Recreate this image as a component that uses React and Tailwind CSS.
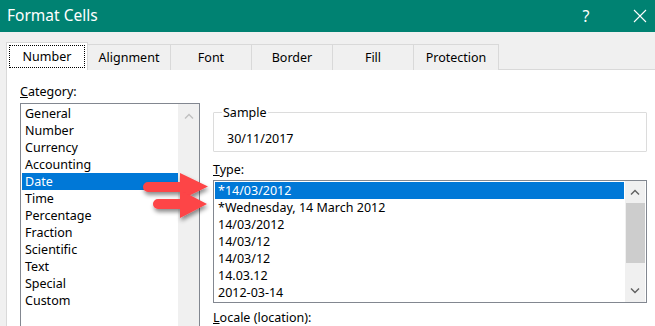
import React from "react";

const categories = ["General","Number","Currency","Accounting","Date","Time","Percentage","Fraction","Scientific","Text","Special","Custom"];
const types = ["*14/03/2012","*Wednesday, 14 March 2012","14/03/2012","14/03/12","14/03/12","14.03.12","2012-03-14"];
const tabs = [["Number",82],["Alignment",83],["Font",81],["Border",81],["Fill",81],["Protection",85]];

function Chevron({ up, color }) {
  return (
    <svg width="10" height="6" viewBox="0 0 10 6">
      <path d={up ? "M1 5.5L5 1.5L9 5.5" : "M1 0.5L5 4.5L9 0.5"} fill="none" stroke={color} strokeWidth="1.4" />
    </svg>
  );
}

export default function App() {
  return (
    <div className="relative w-[655px] h-[326px] overflow-hidden bg-[#f0f0f0] text-[12.5px] text-black" style={{ fontFamily: '"Noto Sans", "Segoe UI", sans-serif' }}>
      {/* Title bar */}
      <div className="h-[32px] bg-[#008272] flex items-center text-white">
        <div className="pl-[7px] text-[15.5px] flex-1 leading-none">Format Cells</div>
        <div className="w-[20px] text-[16px] leading-none mr-[37px] text-center">?</div>
        <svg width="14" height="14" viewBox="0 0 14 14" className="mr-[8px]">
          <path d="M1 1L13 13M13 1L1 13" stroke="white" strokeWidth="1.1" />
        </svg>
      </div>
      {/* Tabs */}
      <div className="flex items-end pl-[6px] mt-[10px] h-[28px]">
        {tabs.map(([t, w], i) =>
          i === 0 ? (
            <div key={t} className="h-[28px] bg-white border border-b-0 border-[#d9d9d9] flex items-center justify-center p-[2px]" style={{ width: w }}>
              <div className="w-full h-full border border-dotted border-black flex items-center justify-center pt-[1px]">{t}</div>
            </div>
          ) : (
            <div key={t} className="h-[26px] bg-[#f0f0f0] border border-l-0 border-b-0 border-[#d9d9d9] flex items-center justify-center pt-[2px]" style={{ width: w }}>{t}</div>
          )
        )}
        <div className="flex-1 h-full border-b border-[#d9d9d9]" />
      </div>
      {/* Panel */}
      <div className="ml-[6px] h-[260px] bg-white border-l border-[#d9d9d9] flex pl-[13px]">
        {/* Left column */}
        <div className="w-[180px] pt-[13px]">
          <div className="leading-[17px] h-[20px]"><span className="underline">C</span>ategory:</div>
          <div className="mt-0 h-[240px] border border-[#828790] p-[1px] flex">
            <div className="flex-1">
              {categories.map((c) => (
                <div key={c} className={"h-[17px] leading-[17px] pl-[3px] " + (c === "Date" ? "bg-[#0078d7] text-white" : "")}>{c}</div>
              ))}
            </div>
            <div className="w-[21px] -my-[1px] -mr-[1px] bg-[#f0f0f0] flex flex-col items-center pt-[9px]">
              <Chevron up color="#c0c0c0" />
            </div>
          </div>
        </div>
        {/* Right column */}
        <div className="ml-[13px] w-[434px] pt-[42px]">
          <div className="relative h-[40px] border border-[#dcdcdc] rounded-[1px]">
            <div className="absolute -top-[9px] left-[8px] bg-white px-[1px] leading-[17px]">Sample</div>
            <div className="pl-[13px] pt-[17px] leading-[17px]">30/11/2017</div>
          </div>
          <div className="mt-[9px] leading-[17px] h-[19px]"><span className="underline">T</span>ype:</div>
          <div className="h-[123px] border border-[#828790] p-[1px] flex">
            <div className="flex-1">
              {types.map((t, i) => (
                <div key={i} className={"h-[17px] leading-[17px] pl-[3px] " + (i === 0 ? "bg-[#0078d7] text-white" : "")}>{t}</div>
              ))}
            </div>
            <div className="w-[20px] ml-[1px] -my-[1px] bg-[#f0f0f0] flex flex-col items-center">
              <div className="h-[22px] flex items-center"><Chevron up color="#606060" /></div>
              <div className="w-[19px] h-[60px] bg-[#cdcdcd]" />
              <div className="flex-1" />
              <div className="h-[22px] flex items-center"><Chevron color="#606060" /></div>
            </div>
          </div>
          <div className="mt-[6px] leading-[17px]"><span className="underline">L</span>ocale (location):</div>
        </div>
      </div>
      {/* Red arrows overlay */}
      <svg className="absolute left-0 top-0 pointer-events-none" width="655" height="326" viewBox="0 0 655 326">
        <defs>
          <filter id="sh" x="-30%" y="-30%" width="160%" height="180%">
            <feDropShadow dx="1" dy="3" stdDeviation="2" floodColor="#000" floodOpacity="0.45" />
          </filter>
        </defs>
        <g filter="url(#sh)" fill="#fd4447">
          <path d="M148 182 H180 V173 L208 186.5 L180 200 V192 H148 A5 5 0 0 1 148 182 Z" />
          <path d="M158 199 H180 V190 L207 204 L180 218 V209 H158 A5 5 0 0 1 158 199 Z" />
        </g>
      </svg>
    </div>
  );
}
